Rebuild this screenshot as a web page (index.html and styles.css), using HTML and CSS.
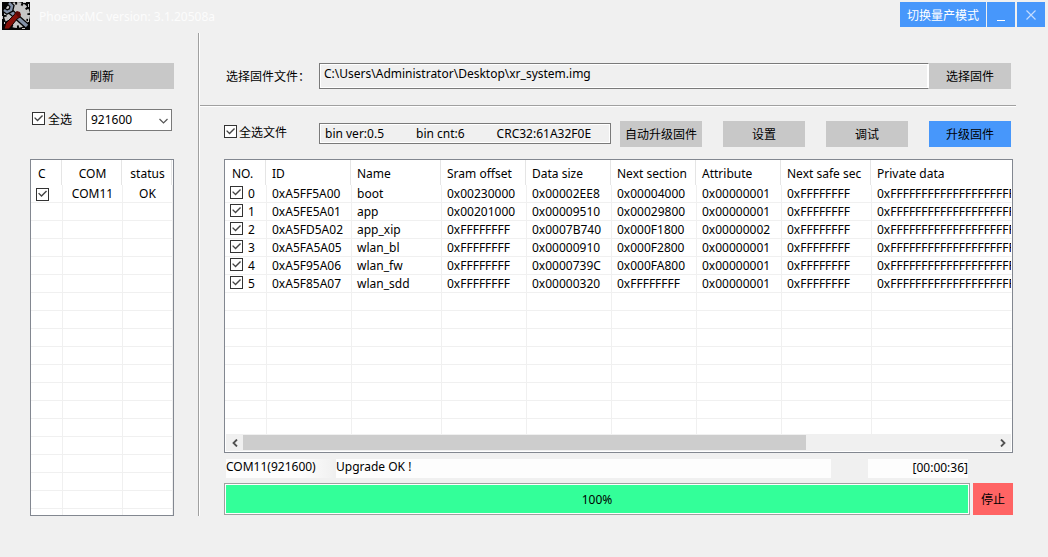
FILE: index.html
```html
<!DOCTYPE html>
<html lang="zh-CN">
<head>
<meta charset="utf-8">
<title>PhoenixMC</title>
<link rel="stylesheet" href="styles.css">
</head>
<body>
<header class="titlebar">
  <svg class="logo" viewBox="0 0 28 28" aria-hidden="true">
    <rect width="28" height="28" fill="#050505"/>
    <circle cx="15" cy="13" r="10.500" fill="#c6c6c6"/>
    <circle cx="15" cy="13" r="11.500" fill="none" stroke="#c6c6c6" stroke-width="3" stroke-dasharray="4 2"/>
    <path d="M8 9l18 16" stroke="#050505" stroke-width="6"/>
    <path d="M8 9l17 15" stroke="#8492a8" stroke-width="3.500"/>
    <path d="M2 8l3 2 4-2 1-4-3-3" fill="none" stroke="#050505" stroke-width="5"/>
    <path d="M2 8l3 2 4-2 1-4-3-3" fill="none" stroke="#8492a8" stroke-width="2.500"/>
    <path d="M2 27l2-6 8-8 2-3 3 1 1 4-3 2-8 10z" fill="#850f08" stroke="#120303"/>
    <path d="M13 11l2-2 3 1 1 3-2 3z" fill="#5f0804"/>
    <path d="M0 14h1v3H0zM2 20h1v2H2zM20 26h3v1h-3zM26 17h1v3h-1zM26 2h1v3h-1zM21 0h3v1h-3z" fill="#c6c6c6"/>
  </svg>
  <h1 class="title">PhoenixMC version: 3.1.20508a</h1>
  <button class="mode" type="button">切换量产模式</button>
  <button class="win" type="button" aria-label="最小化"><svg width="16" height="16" viewBox="0 0 16 16"><path d="M4 13.5h8" stroke="#fff"/></svg></button>
  <button class="win close" type="button" aria-label="关闭"><svg width="12" height="12" viewBox="0 0 12 12"><path d="M1.500 1.500l9 9M10.500 1.500l-9 9" stroke="#c4dcff" stroke-width="1.200"/></svg></button>
</header>
<div class="layout">
  <aside class="side">
    <button class="btn" type="button">刷新</button>
    <div class="port">
      <label class="check"><input type="checkbox" checked>全选</label>
      <span class="combo">
        <select aria-label="波特率"><option>921600</option></select>
        <svg width="9" height="6" viewBox="0 0 9 6"><path d="M.5 1l4 4 4-4" fill="none" stroke="#555" stroke-width="1.200"/></svg>
      </span>
    </div>
    <div class="list">
      <table class="ports">
        <colgroup><col class="c32"><col class="c60"><col class="c50"><col></colgroup>
        <thead><tr><th>C</th><th>COM</th><th>status</th><th></th></tr></thead>
        <tbody>
          <tr><td><input type="checkbox" aria-label="COM11" checked></td><td>COM11</td><td>OK</td><td></td></tr>
          <tr><td></td><td></td><td></td><td></td></tr>
          <tr><td></td><td></td><td></td><td></td></tr>
          <tr><td></td><td></td><td></td><td></td></tr>
          <tr><td></td><td></td><td></td><td></td></tr>
          <tr><td></td><td></td><td></td><td></td></tr>
          <tr><td></td><td></td><td></td><td></td></tr>
          <tr><td></td><td></td><td></td><td></td></tr>
          <tr><td></td><td></td><td></td><td></td></tr>
          <tr><td></td><td></td><td></td><td></td></tr>
          <tr><td></td><td></td><td></td><td></td></tr>
          <tr><td></td><td></td><td></td><td></td></tr>
          <tr><td></td><td></td><td></td><td></td></tr>
          <tr><td></td><td></td><td></td><td></td></tr>
          <tr><td></td><td></td><td></td><td></td></tr>
          <tr><td></td><td></td><td></td><td></td></tr>
          <tr><td></td><td></td><td></td><td></td></tr>
          <tr><td></td><td></td><td></td><td></td></tr>
          <tr class="rest"><td></td><td></td><td></td><td></td></tr>
        </tbody>
      </table>
    </div>
  </aside>
  <main class="main">
    <div class="row file">
      <label class="caption" for="path">选择固件文件：</label>
      <input class="path" id="path" type="text" readonly value="C:\Users\Administrator\Desktop\xr_system.img">
      <button class="btn" type="button">选择固件</button>
    </div>
    <hr class="rule">
    <div class="row tools">
      <label class="check"><input type="checkbox" checked>全选文件</label>
      <div class="info"><span>bin ver:0.5</span><span>bin cnt:6</span><span>CRC32:61A32F0E</span></div>
      <div class="actions">
        <button class="btn" type="button">自动升级固件</button>
        <button class="btn" type="button">设置</button>
        <button class="btn" type="button">调试</button>
        <button class="btn primary" type="button">升级固件</button>
      </div>
    </div>
    <div class="list">
      <table class="files">
        <colgroup><col class="c42"><col class="c85"><col class="c90"><col class="c85"><col class="c85"><col class="c85"><col class="c85"><col class="c90"><col></colgroup>
        <thead><tr><th>NO.</th><th>ID</th><th>Name</th><th>Sram offset</th><th>Data size</th><th>Next section</th><th>Attribute</th><th>Next safe sec</th><th>Private data</th></tr></thead>
        <tbody>
          <tr><td><label class="check"><input type="checkbox" checked>0</label></td><td>0xA5FF5A00</td><td>boot</td><td>0x00230000</td><td>0x00002EE8</td><td>0x00004000</td><td>0x00000001</td><td>0xFFFFFFFF</td><td>0xFFFFFFFFFFFFFFFFFFFFF</td></tr>
          <tr><td><label class="check"><input type="checkbox" checked>1</label></td><td>0xA5FE5A01</td><td>app</td><td>0x00201000</td><td>0x00009510</td><td>0x00029800</td><td>0x00000001</td><td>0xFFFFFFFF</td><td>0xFFFFFFFFFFFFFFFFFFFFF</td></tr>
          <tr><td><label class="check"><input type="checkbox" checked>2</label></td><td>0xA5FD5A02</td><td>app_xip</td><td>0xFFFFFFFF</td><td>0x0007B740</td><td>0x000F1800</td><td>0x00000002</td><td>0xFFFFFFFF</td><td>0xFFFFFFFFFFFFFFFFFFFFF</td></tr>
          <tr><td><label class="check"><input type="checkbox" checked>3</label></td><td>0xA5FA5A05</td><td>wlan_bl</td><td>0xFFFFFFFF</td><td>0x00000910</td><td>0x000F2800</td><td>0x00000001</td><td>0xFFFFFFFF</td><td>0xFFFFFFFFFFFFFFFFFFFFF</td></tr>
          <tr><td><label class="check"><input type="checkbox" checked>4</label></td><td>0xA5F95A06</td><td>wlan_fw</td><td>0xFFFFFFFF</td><td>0x0000739C</td><td>0x000FA800</td><td>0x00000001</td><td>0xFFFFFFFF</td><td>0xFFFFFFFFFFFFFFFFFFFFF</td></tr>
          <tr><td><label class="check"><input type="checkbox" checked>5</label></td><td>0xA5F85A07</td><td>wlan_sdd</td><td>0xFFFFFFFF</td><td>0x00000320</td><td>0xFFFFFFFF</td><td>0x00000001</td><td>0xFFFFFFFF</td><td>0xFFFFFFFFFFFFFFFFFFFFF</td></tr>
          <tr><td></td><td></td><td></td><td></td><td></td><td></td><td></td><td></td><td></td></tr>
          <tr><td></td><td></td><td></td><td></td><td></td><td></td><td></td><td></td><td></td></tr>
          <tr><td></td><td></td><td></td><td></td><td></td><td></td><td></td><td></td><td></td></tr>
          <tr><td></td><td></td><td></td><td></td><td></td><td></td><td></td><td></td><td></td></tr>
          <tr><td></td><td></td><td></td><td></td><td></td><td></td><td></td><td></td><td></td></tr>
          <tr><td></td><td></td><td></td><td></td><td></td><td></td><td></td><td></td><td></td></tr>
          <tr><td></td><td></td><td></td><td></td><td></td><td></td><td></td><td></td><td></td></tr>
          <tr class="rest"><td></td><td></td><td></td><td></td><td></td><td></td><td></td><td></td><td></td></tr>
        </tbody>
      </table>
      <div class="scroll">
        <button type="button" aria-label="向左滚动"><svg width="8" height="8" viewBox="0 0 8 8"><path d="M6 .5L2.500 4 6 7.500" fill="none" stroke="#505050" stroke-width="1.800"/></svg></button>
        <div class="track"><div class="thumb"></div></div>
        <button type="button" aria-label="向右滚动"><svg width="8" height="8" viewBox="0 0 8 8"><path d="M2 .5L5.500 4 2 7.500" fill="none" stroke="#505050" stroke-width="1.800"/></svg></button>
      </div>
    </div>
    <div class="status">
      <span class="port-name">COM11(921600)</span>
      <span class="message">Upgrade OK !</span>
      <span class="time">[00:00:36]</span>
    </div>
    <div class="progress-row">
      <div class="progress" role="progressbar" aria-valuenow="100" aria-label="升级进度"><div class="fill" style="width:100%">100%</div></div>
      <button class="stop" type="button">停止</button>
    </div>
  </main>
</div>
</body>
</html>
```
FILE: styles.css
```css
* { box-sizing: border-box; }
body, button, input, select {
  font-family: "Noto Sans", "Noto Sans CJK SC", sans-serif;
  font-size: 12px;
  line-height: 16px;
  color: #000;
}
body { margin: 0; background: #f0f0f0; }
button { border: 0; padding: 0; white-space: nowrap; }

.titlebar { display: flex; align-items: flex-start; height: 33px; padding: 2px 3px 0 2px; }
.logo { width: 28px; height: 28px; flex: none; }
.title { flex: 1; margin: 0; padding: 7px 0 0 9px; font-size: 12px; font-weight: 400; color: #fcfcfc; }
.mode, .win { height: 25px; background: #4797fb; color: #fff; display: flex; align-items: center; justify-content: center; }
.mode { width: 86px; padding-top: 2px; }
.win { width: 28px; margin-left: 1px; }
.close { margin-left: 2px; }

.layout { display: flex; }
.side { flex: none; width: 199px; padding: 30px 24px 0 30px; border-right: 1px solid #a0a0a0; }
.main { flex: 1; min-width: 0; padding: 30px 35px 0 24px; border-left: 1px solid #fff; }

.btn { width: 82px; height: 26px; padding-top: 2px; background: #c8c8c8; flex: none; }
.side .btn { width: 100%; display: block; }
.primary { background: #4797fb; }

.check { display: flex; align-items: center; gap: 3px; white-space: nowrap; }
input[type="checkbox"] {
  appearance: none;
  display: block;
  flex: none;
  width: 13px;
  height: 13px;
  margin: 0;
  border: 1px solid #333;
  background: #fff;
}
input[type="checkbox"]:checked::before {
  content: "";
  display: block;
  width: 11px;
  height: 11px;
  background: #444;
  clip-path: polygon(10% 46%, 19% 38%, 41% 60%, 82% 18%, 91% 27%, 41% 78%);
}
.check input[type="checkbox"] { margin-bottom: 3px; }

.port { display: flex; align-items: center; height: 22px; margin: 20px 0 28px; padding: 0 2px; }
.combo { position: relative; margin-left: auto; }
.combo select {
  appearance: none;
  display: block;
  width: 86px;
  height: 22px;
  padding: 0 4px;
  border: 1px solid #7a7a7a;
  border-radius: 0;
  background: #fff;
}
.combo svg { position: absolute; right: 4px; top: 9px; pointer-events: none; }

.list { border: 1px solid #828790; background: #fff; }
table { width: 100%; table-layout: fixed; border-collapse: separate; border-spacing: 0; }
th, td { padding: 0 0 0 5px; text-align: left; font-weight: 400; overflow: hidden; white-space: nowrap; border-right: 1px solid #f0f0f0; }
th { height: 25px; padding-top: 3px; border-color: #fff; box-shadow: inset -1px 0 #e5e5e5; }
th:first-child { padding-left: 7px; }
td { height: 18px; padding-top: 1px; border-bottom: 1px solid #f0f0f0; }
th:last-child, td:last-child { border-right-color: #fff; box-shadow: none; }
.rest td { height: 6px; border-bottom: 0; }
.files .rest td { height: 15px; }
.ports th:nth-child(n+2), .ports td:nth-child(n+2) { text-align: center; padding-left: 0; }
.files .check { gap: 5px; }
.c32 { width: 32px; }
.c42 { width: 42px; }
.c50 { width: 50px; }
.c60 { width: 60px; }
.c85 { width: 85px; }
.c90 { width: 90px; }

.scroll { display: flex; height: 17px; margin: 0 1px 1px; background: #f0f0f0; }
.scroll button { width: 17px; background: none; display: flex; align-items: center; justify-content: center; }
.track { flex: 1; }
.thumb { width: 75%; height: 15px; margin-top: 1px; background: #cdcdcd; }

.row { display: flex; padding-right: 2px; }
.caption { width: 95px; padding: 6px 0 0 2px; flex: none; white-space: nowrap; }
.path { flex: 1; min-width: 0; height: 26px; padding: 0 4px 5px; border: 1px solid #7a7a7a; border-right-color: #fff; background: #f0f0f0; box-shadow: inset 0 0 0 1px #fff; }
.rule { height: 2px; margin: 16px -3px 14px -24px; border: 0; border-top: 1px solid #a0a0a0; background: #fff; }
.tools { height: 26px; margin-bottom: 12px; }
.tools > .check { width: 95px; height: 24px; gap: 2px; }
.info { flex: 1; display: flex; align-items: center; gap: 32px; height: 21px; margin: 2px 9px 0 0; padding-left: 5px; border: 1px solid #7a7a7a; box-shadow: inset 0 0 0 1px #fff; white-space: nowrap; }
.actions { display: flex; gap: 21px; }

.status { display: flex; margin: 6px 0 5px; padding: 0 45px 0 2px; }
.status span { height: 19px; background: #fdfdfd; white-space: nowrap; }
.status .port-name { width: 107px; background: linear-gradient(90deg, #fdfdfd 70%, #f1f1f1); }
.message { flex: 1; margin: 0 37px 0 3px; }
.status .time { width: 100px; padding-top: 1px; text-align: right; }
.progress-row { display: flex; gap: 3px; height: 32px; }
.progress { flex: 1; padding: 1px; border: 1px solid #a0a0a0; background: #fff; }
.fill { height: 100%; padding-top: 1px; background: #33ff99; display: flex; align-items: center; justify-content: center; }
.stop { width: 40px; padding-top: 2px; background: #ff6464; }
```
